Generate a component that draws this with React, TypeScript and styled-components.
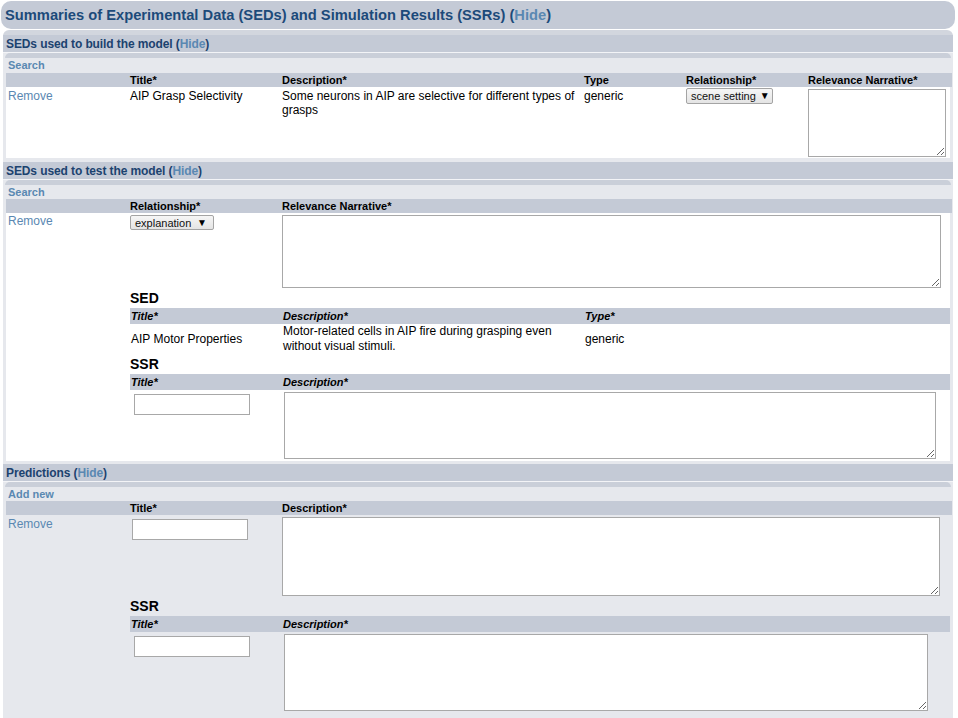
import styled, { createGlobalStyle } from 'styled-components'

const GlobalStyle = createGlobalStyle`
  body {
    margin: 0;
    background: #ffffff;
    font-family: "Liberation Sans", Arial, sans-serif;
    font-size: 12px;
    color: #000;
  }
`

const headerBg = '#c4cad6'
const lightBg = '#e6e8ed'
const linkColor = '#5a88b2'

const Page = styled.div`
  width: 954px;
  padding: 1px;
`

const MainHeader = styled.h2`
  margin: 0;
  height: 28px;
  line-height: 29px;
  padding: 0 4px;
  background: ${headerBg};
  border-radius: 10px;
  font-size: 14.7px;
  font-weight: bold;
  color: #1c4a7a;
`

const Hide = styled.a`
  color: ${linkColor};
  cursor: pointer;
`

const Body = styled.div`
  margin: 1px 2px 0;
  background: ${lightBg};
  border-top: 5px solid #d2d6de;
  border-radius: 6px 6px 0 0;
  min-height: 700px;
`

const Section = styled.section<{ $gap?: number }>`
  padding-bottom: ${p => p.$gap ?? 3}px;
`

const SectionHeader = styled.h3`
  margin: 0;
  height: 17px;
  line-height: 18px;
  padding-left: 3px;
  background: ${headerBg};
  border-bottom: 1px solid #f3f4f7;
  font-size: 12px;
  letter-spacing: -0.1px;
  font-weight: bold;
  color: #1c426f;
`

const SubCap = styled.div`
  height: 5px;
  margin: 0 2px;
  background: #cacfd9;
  border-radius: 5px 5px 0 0;
`

const SubBody = styled.div`
  padding: 0 1px 0 3px;
`

const Action = styled.a<{ $h?: number }>`
  display: block;
  height: ${p => p.$h ?? 15}px;
  line-height: 15px;
  padding-left: 2px;
  font-size: 11px;
  font-weight: bold;
  color: ${linkColor};
  cursor: pointer;
`

const HeadRow = styled.div<{ $cols: string; $italic?: boolean }>`
  display: grid;
  grid-template-columns: ${p => p.$cols};
  background: ${headerBg};
  line-height: ${p => (p.$italic ? '16px' : '14px')};
  font-size: 11px;
  font-weight: bold;
  font-style: ${p => (p.$italic ? 'italic' : 'normal')};
`

const HeadCell = styled.div<{ $pad?: number }>`
  padding-left: ${p => p.$pad ?? 2}px;
  white-space: nowrap;
`

const DataRow = styled.div<{ $cols: string; $white?: boolean; $padBottom?: number }>`
  display: grid;
  grid-template-columns: ${p => p.$cols};
  margin-right: 2px;
  padding-bottom: ${p => p.$padBottom ?? 0}px;
  background: ${p => (p.$white ? '#ffffff' : 'transparent')};
`

const Cell = styled.div<{ $top?: number; $left?: number; $middle?: boolean }>`
  padding: ${p => p.$top ?? 2}px 0 0 ${p => p.$left ?? 2}px;
  line-height: 14px;
  align-self: ${p => (p.$middle ? 'center' : 'start')};
`

const Remove = styled.a`
  color: ${linkColor};
  line-height: 14px;
  cursor: pointer;
`

const Nested = styled.div`
  grid-column: 2 / -1;
  padding-left: 2px;
`

const Heading = styled.h4`
  margin: 2px 0 1px;
  line-height: 17px;
  font-size: 14px;
  font-weight: bold;
`

const SubRow = styled.div<{ $cols: string }>`
  display: grid;
  grid-template-columns: ${p => p.$cols};
  align-items: center;
`

const Wrapped = styled.span`
  line-height: 15px;
`

const TextArea = styled.textarea<{ $w: number; $h: number }>`
  display: block;
  box-sizing: border-box;
  width: ${p => p.$w}px;
  height: ${p => p.$h}px;
  margin: 0;
  border: 1px solid #a8a8a8;
  background: #fff;
  font-family: "Liberation Sans", Arial, sans-serif;
  font-size: 12px;
  outline: none;
`

const TextInput = styled.input`
  display: block;
  box-sizing: border-box;
  width: 116px;
  height: 21px;
  margin: 0;
  border: 1px solid #a8a8a8;
  background: #fff;
  outline: none;
`

const SelectBox = styled.div<{ $w: number; $h: number }>`
  box-sizing: border-box;
  display: flex;
  align-items: center;
  justify-content: space-between;
  gap: 4px;
  width: ${p => p.$w}px;
  height: ${p => p.$h}px;
  padding: 0 6px 0 4px;
  border: 1px solid #a4a4a4;
  border-radius: 2px;
  background: linear-gradient(#f6f6f6, #e4e4e4);
  font-size: 11px;
  white-space: nowrap;
  color: #111;
`

const Arrow = styled.span`
  font-size: 10px;
  line-height: 10px;
  color: #000;
`

const threeCols = '122px 152px 1fr'
const nestedCols = '152px 302px 1fr'
const sixCols = '122px 152px 302px 102px 122px 1fr'

export default function App() {
  return (
    <Page>
      <GlobalStyle />
      <MainHeader>
        Summaries of Experimental Data (SEDs) and Simulation Results (SSRs) (<Hide>Hide</Hide>)
      </MainHeader>
      <Body>
        <Section $gap={4}>
          <SectionHeader>
            SEDs used to build the model (<Hide>Hide</Hide>)
          </SectionHeader>
          <SubCap />
          <SubBody>
            <Action>Search</Action>
            <HeadRow $cols={sixCols}>
              <HeadCell />
              <HeadCell>Title*</HeadCell>
              <HeadCell>Description*</HeadCell>
              <HeadCell>Type</HeadCell>
              <HeadCell>Relationship*</HeadCell>
              <HeadCell>Relevance Narrative*</HeadCell>
            </HeadRow>
            <DataRow $cols={sixCols} $white $padBottom={1}>
              <Cell><Remove>Remove</Remove></Cell>
              <Cell>AIP Grasp Selectivity</Cell>
              <Cell>Some neurons in AIP are selective for different types of grasps</Cell>
              <Cell>generic</Cell>
              <Cell $top={1}>
                <SelectBox $w={87} $h={16}>
                  <span>scene setting</span>
                  <Arrow>▼</Arrow>
                </SelectBox>
              </Cell>
              <Cell>
                <TextArea $w={138} $h={68} />
              </Cell>
            </DataRow>
          </SubBody>
        </Section>

        <Section>
          <SectionHeader>
            SEDs used to test the model (<Hide>Hide</Hide>)
          </SectionHeader>
          <SubCap />
          <SubBody>
            <Action $h={14}>Search</Action>
            <HeadRow $cols={threeCols}>
              <HeadCell />
              <HeadCell>Relationship*</HeadCell>
              <HeadCell>Relevance Narrative*</HeadCell>
            </HeadRow>
            <DataRow $cols={threeCols} $white $padBottom={2}>
              <Cell $top={1}><Remove>Remove</Remove></Cell>
              <Cell>
                <SelectBox $w={84} $h={15}>
                  <span>explanation</span>
                  <Arrow>▼</Arrow>
                </SelectBox>
              </Cell>
              <Cell>
                <TextArea $w={659} $h={73} />
              </Cell>
              <Nested>
                <Heading>SED</Heading>
                <HeadRow $cols={nestedCols} $italic>
                  <HeadCell $pad={1}>Title*</HeadCell>
                  <HeadCell $pad={1}>Description*</HeadCell>
                  <HeadCell $pad={1}>Type*</HeadCell>
                </HeadRow>
                <SubRow $cols={nestedCols}>
                  <Cell $top={0} $left={1} $middle>AIP Motor Properties</Cell>
                  <Cell $top={0} $left={1} $middle>
                    <Wrapped>
                      Motor-related cells in AIP fire during grasping even without visual stimuli.
                    </Wrapped>
                  </Cell>
                  <Cell $top={0} $left={1} $middle>generic</Cell>
                </SubRow>
                <Heading>SSR</Heading>
                <HeadRow $cols={nestedCols} $italic>
                  <HeadCell $pad={1}>Title*</HeadCell>
                  <HeadCell $pad={1}>Description*</HeadCell>
                </HeadRow>
                <DataRow $cols="152px 1fr">
                  <Cell $top={4} $left={4}>
                    <TextInput />
                  </Cell>
                  <Cell>
                    <TextArea $w={652} $h={67} />
                  </Cell>
                </DataRow>
              </Nested>
            </DataRow>
          </SubBody>
        </Section>

        <Section>
          <SectionHeader>
            Predictions (<Hide>Hide</Hide>)
          </SectionHeader>
          <SubCap />
          <SubBody>
            <Action $h={14}>Add new</Action>
            <HeadRow $cols={threeCols}>
              <HeadCell />
              <HeadCell>Title*</HeadCell>
              <HeadCell>Description*</HeadCell>
            </HeadRow>
            <DataRow $cols={threeCols}>
              <Cell><Remove>Remove</Remove></Cell>
              <Cell $top={4} $left={4}>
                <TextInput />
              </Cell>
              <Cell>
                <TextArea $w={658} $h={79} />
              </Cell>
              <Nested>
                <Heading>SSR</Heading>
                <HeadRow $cols={nestedCols} $italic>
                  <HeadCell $pad={1}>Title*</HeadCell>
                  <HeadCell $pad={1}>Description*</HeadCell>
                </HeadRow>
                <DataRow $cols="152px 1fr">
                  <Cell $top={4} $left={4}>
                    <TextInput />
                  </Cell>
                  <Cell>
                    <TextArea $w={644} $h={77} />
                  </Cell>
                </DataRow>
              </Nested>
            </DataRow>
          </SubBody>
        </Section>
      </Body>
    </Page>
  )
}
